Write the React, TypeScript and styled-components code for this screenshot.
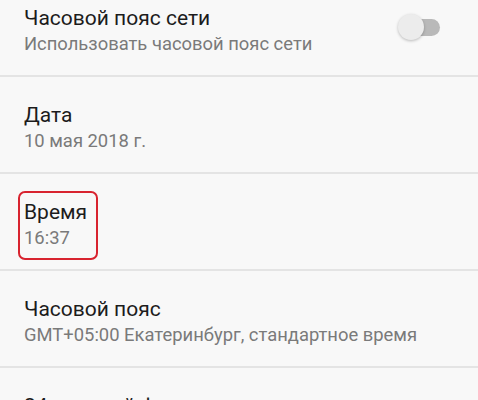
import React from "react";
import styled, { createGlobalStyle } from "styled-components";

const GlobalStyle = createGlobalStyle`
  html, body {
    margin: 0;
    padding: 0;
    background: #f8f8f8;
    overflow: hidden;
  }
  body {
    font-family: Roboto, "Noto Sans", "Liberation Sans", sans-serif;
  }
`;

const Screen = styled.div`
  width: 478px;
  height: 400px;
  overflow: hidden;
  background: #f8f8f8;
`;

const List = styled.div`
  display: flex;
  flex-direction: column;
  margin-top: -20px;
`;

const Row = styled.div`
  display: flex;
  align-items: center;
  justify-content: space-between;
  height: 97px;
  box-sizing: border-box;
  padding: 26px 38px 20px 24px;
  border-bottom: 2px solid #e4e4e4;
  flex-shrink: 0;
`;

const Texts = styled.div`
  display: flex;
  flex-direction: column;
`;

const Title = styled.div`
  font-size: 21px;
  line-height: 26px;
  color: #1c1c1c;
`;

const Summary = styled.div`
  font-size: 18.4px;
  line-height: 25px;
  color: #7a7a7a;
`;

const Highlight = styled.div`
  position: relative;

  &::after {
    content: "";
    position: absolute;
    left: -6px;
    right: -11px;
    top: -8px;
    bottom: -10px;
    border: 2px solid #d8232f;
    border-radius: 7px;
  }
`;

const Switch = styled.div`
  position: relative;
  width: 40px;
  height: 17px;
  margin-top: -6px;
  border-radius: 9px;
  background: #b9b9b9;

  &::before {
    content: "";
    position: absolute;
    left: -2px;
    top: -5px;
    width: 26px;
    height: 26px;
    border-radius: 50%;
    background: #ececec;
    box-shadow: 0 1px 3px rgba(0, 0, 0, 0.25);
  }
`;

const items = [
  { title: "Часовой пояс сети", summary: "Использовать часовой пояс сети", toggle: true },
  { title: "Дата", summary: "10 мая 2018 г." },
  { title: "Время", summary: "16:37", marked: true },
  { title: "Часовой пояс", summary: "GMT+05:00 Екатеринбург, стандартное время" },
  { title: "24-часовой формат", summary: "13:00" },
];

const App = () => {
  return (
    <Screen>
      <GlobalStyle />
      <List>
        {items.map((item) => {
          const texts = (
            <Texts>
              <Title>{item.title}</Title>
              <Summary>{item.summary}</Summary>
            </Texts>
          );
          return (
            <Row key={item.title}>
              {item.marked ? <Highlight>{texts}</Highlight> : texts}
              {item.toggle && <Switch />}
            </Row>
          );
        })}
      </List>
    </Screen>
  );
};

export default App;
